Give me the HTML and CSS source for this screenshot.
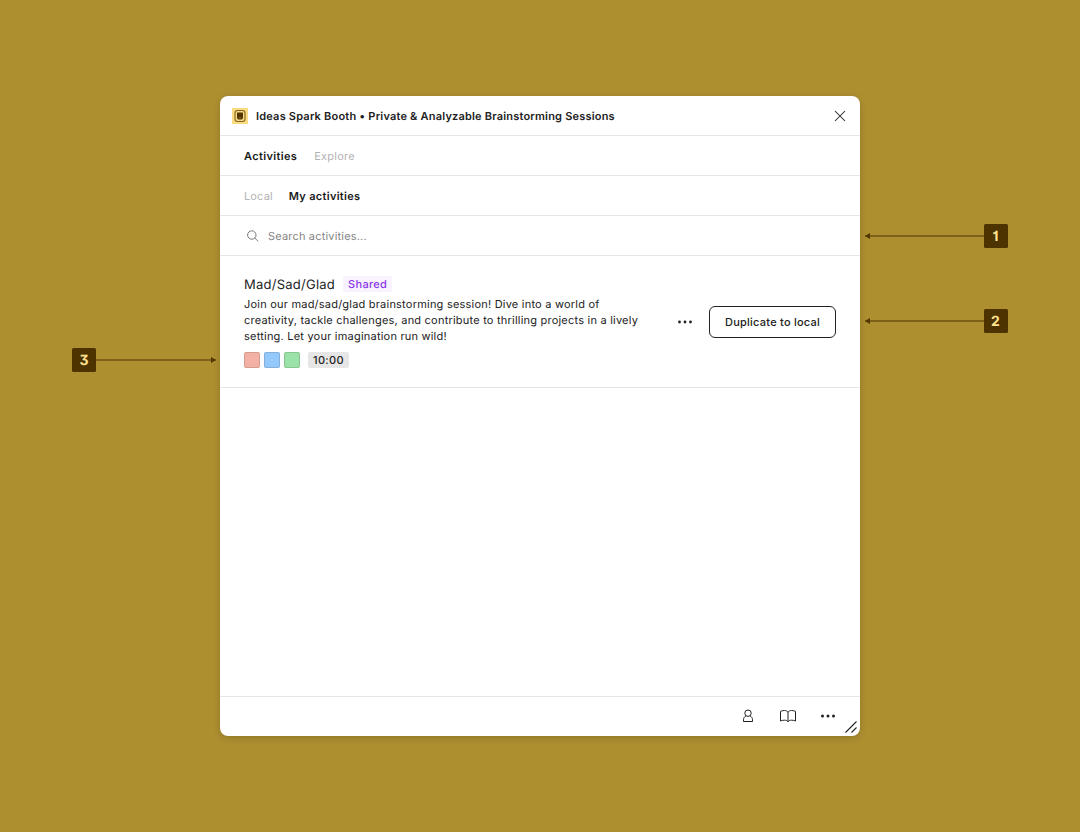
FILE: index.html
```
<!DOCTYPE html>
<html lang="en">
<head>
<meta charset="utf-8">
<title>Ideas Spark Booth</title>
<link rel="stylesheet" href="styles.css">
</head>
<body>
<main class="window">
  <header class="titlebar">
    <svg class="logo" width="16" height="16" viewBox="0 0 16 16" fill="none"><rect width="16" height="16" fill="#fadb82"/><rect x="3" y="2.500" width="10" height="11" rx="2.500" stroke="#806020" stroke-width="1.100"/><path d="M5 4.500h6v5.500l-1 1.500H6L5 10z" fill="#513600"/><path d="M6.500 9.300h3v1h-3z" fill="#8b651a"/></svg>
    <h1 class="title">Ideas Spark Booth <span class="dot">•</span> Private &amp; Analyzable Brainstorming Sessions</h1>
    <svg class="close" width="12" height="12" viewBox="0 0 12 12" fill="none" stroke="#222" stroke-width="1.050"><path d="M1 1l10 10M11 1L1 11"/></svg>
  </header>
  <nav class="tabs tabs-main"><span class="tab active tab-activities">Activities</span><span class="tab">Explore</span></nav>
  <nav class="tabs"><span class="tab tab-local">Local</span><span class="tab active">My activities</span></nav>
  <div class="search">
    <svg width="12" height="12" viewBox="0 0 12 12" fill="none" stroke="#777" stroke-width="1"><circle cx="4.800" cy="5" r="4.200"/><path d="M7.800 8l3.400 3.400"/></svg>
    <span>Search activities...</span>
  </div>
  <article class="activity">
    <div class="info">
      <div class="heading"><h2 class="name">Mad/Sad/Glad</h2><span class="badge">Shared</span></div>
      <p class="description">Join our mad/sad/glad brainstorming session! Dive into a world of<br>creativity, tackle challenges, and contribute to thrilling projects in a lively<br>setting. Let your imagination run wild!</p>
      <div class="meta"><i class="swatch red"></i><i class="swatch blue"></i><i class="swatch green"></i><span class="time">10:00</span></div>
    </div>
    <svg class="more" width="16" height="4" viewBox="0 0 16 4" fill="#222"><circle cx="2.500" cy="2" r="1.400"/><circle cx="8" cy="2" r="1.400"/><circle cx="13.500" cy="2" r="1.400"/></svg>
    <button class="button">Duplicate to local</button>
  </article>
  <footer class="footer">
    <svg width="16" height="16" viewBox="0 0 16 16" fill="none" stroke="#222"><circle cx="8" cy="5.200" r="3.200"/><path d="M6 7.700C4.400 8.700 3.500 10.100 3.500 11.800v1.700h9v-1.700c0-1.700-.9-3.100-2.500-4.100"/></svg>
    <svg width="18" height="16" viewBox="0 0 18 16" fill="none" stroke="#222"><path d="M9 4.200C8.300 3 7.100 2.500 5.500 2.500c-1.600 0-2.800.3-4 .9v9.600c1.200-.6 2.400-.8 4-.8s2.800.4 3.500 1.500c.7-1.100 1.900-1.500 3.500-1.500s2.800.2 4 .8V3.400c-1.200-.6-2.400-.9-4-.9-1.600 0-2.800.5-3.500 1.700zM9 4v9.700"/></svg>
    <svg width="16" height="4" viewBox="0 0 16 4" fill="#222"><circle cx="2.500" cy="2" r="1.500"/><circle cx="8" cy="2" r="1.500"/><circle cx="13.500" cy="2" r="1.500"/></svg>
  </footer>
  <svg class="resize" width="14" height="14" viewBox="0 0 14 14" fill="none" stroke="#222" stroke-width="1.100"><path d="M1.500 12.500l11-11M7.500 12.500l5-5"/></svg>
</main>
<div class="callout callout-1"><span class="arrow"></span><b class="marker">1</b></div>
<div class="callout callout-2"><span class="arrow"></span><b class="marker">2</b></div>
<div class="callout callout-3"><b class="marker">3</b><span class="arrow"></span></div>
</body>
</html>
```
FILE: styles.css
```
* { box-sizing: border-box; }
body {
  position: relative;
  display: flex;
  align-items: center;
  justify-content: center;
  width: 1080px;
  height: 832px;
  margin: 0;
  background: #ad8f30;
  color: #222;
  font: 400 11px/16px Inter, sans-serif;
  letter-spacing: 0.215px;
  text-rendering: geometricPrecision;
}
svg { display: block; flex: none; }
h1, h2, p { margin: 0; }
.window {
  position: relative;
  display: flex;
  flex-direction: column;
  width: 640px;
  height: 640px;
  background: #fff;
  border-radius: 8px;
  box-shadow: 0 2px 7px rgba(0, 0, 0, 0.15), 0 0 1px rgba(0, 0, 0, 0.15);
}
.titlebar, .tabs, .search {
  display: flex;
  align-items: center;
  height: 40px;
  border-bottom: 1px solid #e5e5e5;
}
.titlebar { padding: 1px 14px 0 12px; }
.title { margin-left: 8px; font-size: 11px; font-weight: 600; letter-spacing: 0.198px; }
.dot { font-weight: 500; }
.close { margin-left: auto; }
.tabs { gap: 16px; padding: 1px 24px 0; }
.tabs-main { gap: 17px; }
.tab { color: #b3b3b3; letter-spacing: 0.25px; }
.tab-local { letter-spacing: 0.15px; }
.active { color: #1a1a1a; font-weight: 600; letter-spacing: 0.3px; }
.tab-activities { letter-spacing: 0.35px; }
.search { gap: 9px; padding: 1px 27px 0; color: #858585; letter-spacing: 0.18px; }
.activity {
  display: flex;
  align-items: center;
  height: 132px;
  padding: 20px 24px 19px;
  border-bottom: 1px solid #e5e5e5;
}
.info { flex: 1; }
.heading { display: flex; align-items: center; gap: 8px; height: 16px; margin-bottom: 4px; }
.name { padding-top: 2px; font-size: 13px; font-weight: 400; line-height: 16px; letter-spacing: 0.25px; }
.badge { padding: 0 5px; border-radius: 2px; background: #f8f3ff; color: #8a38e8; font-weight: 500; letter-spacing: 0.3px; }
.meta { display: flex; gap: 4px; margin-top: 8px; }
.swatch { width: 16px; height: 16px; border: 1px solid rgba(0, 0, 0, 0.12); border-radius: 2px; }
.red { background: #f3b1a6; }
.blue { background: #93c8fb; }
.green { background: #9ae2a7; }
.time { margin-left: 4px; padding: 0 5px; border-radius: 2px; background: #e6e6e6; font-weight: 500; letter-spacing: 0.33px; }
.more { margin-right: 16px; }
.button {
  width: 127px;
  height: 32px;
  padding: 0;
  border: 1px solid #222;
  border-radius: 6px;
  background: #fff;
  color: #222;
  font: 500 11px/16px Inter, sans-serif;
  letter-spacing: 0.24px;
}
.footer {
  display: flex;
  align-items: center;
  justify-content: flex-end;
  gap: 23px;
  height: 40px;
  margin-top: auto;
  padding: 0 24px 1px;
  border-top: 1px solid #e5e5e5;
}
.resize { position: absolute; right: 2px; bottom: 2px; }
.callout { position: absolute; display: flex; align-items: center; width: 144px; height: 24px; }
.callout-1 { left: 864.5px; top: 224px; width: 143px; }
.callout-2 { left: 864.5px; top: 309px; width: 143px; }
.callout-3 { left: 72px; top: 348px; }
.marker {
  width: 24px;
  height: 24px;
  padding-top: 1px;
  border-radius: 1.5px;
  background: #4d3300;
  color: #ffe28d;
  font: 700 14px/24px Inter, sans-serif;
  font-feature-settings: "cv01", "cv09";
  letter-spacing: 0;
  text-align: center;
}
.arrow { position: relative; flex: 1; height: 2px; background: #7d6118; }
.arrow::before {
  content: "";
  position: absolute;
  left: 0;
  top: -2px;
  border: 3px solid transparent;
  border-right: 5px solid #513600;
  border-left: 0;
}
.callout-3 .arrow::before {
  right: 0;
  left: auto;
  border-right: 0;
  border-left: 5px solid #513600;
}
```
